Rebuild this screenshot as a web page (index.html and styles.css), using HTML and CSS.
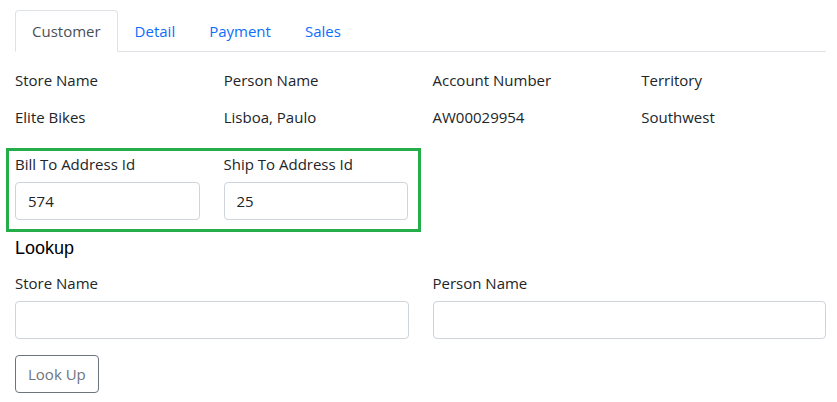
FILE: index.html
```html
<!DOCTYPE html>
<html lang="en">
<head>
<meta charset="utf-8">
<title>Customer</title>
<link rel="stylesheet" href="styles.css">
</head>
<body>
<div class="page">
  <ul class="tabs">
    <li class="tab active">Customer</li>
    <li class="tab">Detail</li>
    <li class="tab">Payment</li>
    <li class="tab">Sales</li>
  </ul>

  <div class="info">
    <div class="item"><div class="lbl">Store Name</div><div class="val">Elite Bikes</div></div>
    <div class="item"><div class="lbl">Person Name</div><div class="val">Lisboa, Paulo</div></div>
    <div class="item"><div class="lbl">Account Number</div><div class="val">AW00029954</div></div>
    <div class="item"><div class="lbl">Territory</div><div class="val">Southwest</div></div>
  </div>

  <div class="addr">
    <div class="field"><label class="flabel">Bill To Address Id</label><input class="input" type="text" value="574"></div>
    <div class="field"><label class="flabel">Ship To Address Id</label><input class="input" type="text" value="25"></div>
  </div>

  <h5 class="lookup-title">Lookup</h5>

  <div class="lookup">
    <div class="field"><label class="flabel">Store Name</label><input class="input" type="text"></div>
    <div class="field"><label class="flabel">Person Name</label><input class="input" type="text"></div>
  </div>

  <button class="btn" type="button">Look Up</button>
</div>
</body>
</html>
```

FILE: styles.css
```css
* { box-sizing: border-box; }

body {
  margin: 0;
  font-family: "Open Sans", "Noto Sans", sans-serif;
  font-size: 15px;
  line-height: 24px;
  color: #212529;
  background: #fff;
}

.page {
  padding: 10px 11px 0 15px;
}

.tabs {
  display: flex;
  list-style: none;
  margin: 0;
  padding: 0;
  border-bottom: 1px solid #dee2e6;
}

.tab {
  padding: 8px 16px;
  border: 1px solid transparent;
  border-top-left-radius: 4px;
  border-top-right-radius: 4px;
  margin-bottom: -1px;
  color: #0d6efd;
}

.tab.active {
  color: #495057;
  background: #fff;
  border-color: #dee2e6 #dee2e6 #fff;
}

.info {
  display: grid;
  grid-template-columns: repeat(4, 1fr);
  column-gap: 24px;
  margin: 16px 0 0 0;
}

.lbl {
  margin-bottom: 13px;
}

.addr {
  display: grid;
  grid-template-columns: 1fr 1fr;
  column-gap: 24px;
  width: 415px;
  margin: 19px 0 0 -9px;
  border: 3px solid #25ad4a;
  padding: 1px 10px 9px 6px;
}

.flabel {
  display: block;
  margin-bottom: 6px;
}

.input {
  display: block;
  width: 100%;
  height: 38px;
  padding: 6px 12px;
  border: 1px solid #ced4da;
  border-radius: 4px;
  font: inherit;
  color: #212529;
  background: #fff;
}

.lookup-title {
  margin: 6px 0 0;
  font-family: "Liberation Sans", Arial, sans-serif;
  font-size: 18px;
  font-weight: normal;
  line-height: 21.6px;
  color: #000;
}

.lookup {
  display: grid;
  grid-template-columns: 1fr 1fr;
  column-gap: 24px;
  margin: 11px 0 0 0;
}

.btn {
  display: block;
  margin-top: 16px;
  height: 38px;
  padding: 6px 12px;
  border: 1px solid #6c757d;
  border-radius: 4px;
  background: #fff;
  color: #6c757d;
  font: inherit;
  line-height: 24px;
}
```
